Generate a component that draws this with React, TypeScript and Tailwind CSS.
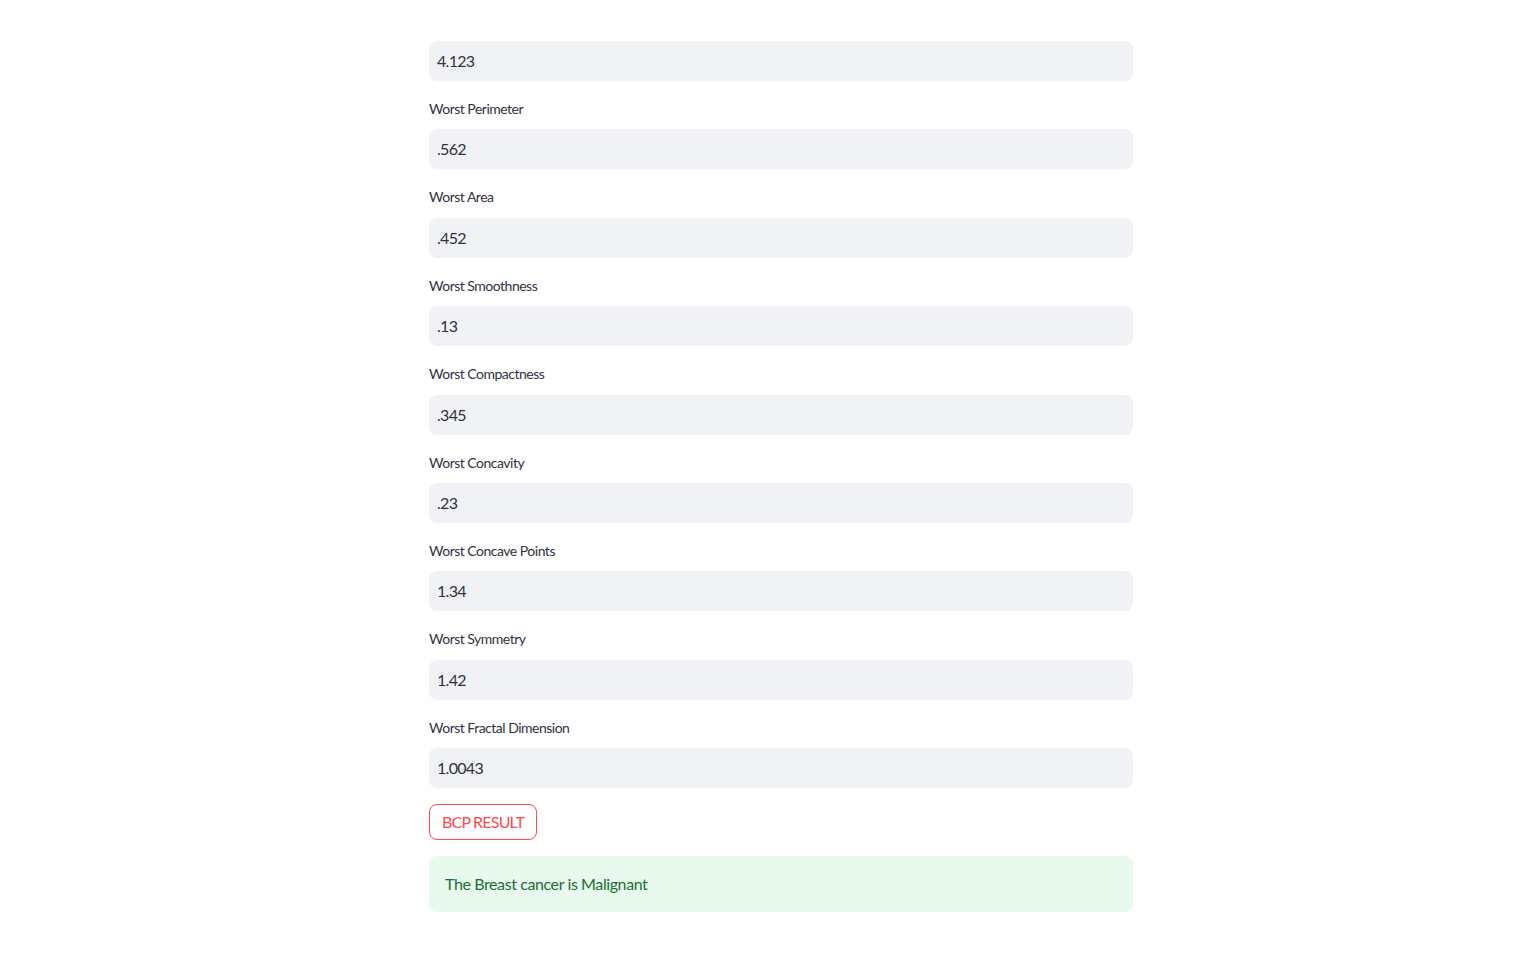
const fields = [
  { label: "Worst Perimeter", value: ".562" },
  { label: "Worst Area", value: ".452" },
  { label: "Worst Smoothness", value: ".13" },
  { label: "Worst Compactness", value: ".345" },
  { label: "Worst Concavity", value: ".23" },
  { label: "Worst Concave Points", value: "1.34" },
  { label: "Worst Symmetry", value: "1.42" },
  { label: "Worst Fractal Dimension", value: "1.0043" },
]

function NumberBox({ value }: { value: string }) {
  return (
    <div className="h-10 w-full rounded-lg bg-[#f0f2f6] flex items-center px-2 text-base tracking-[-0.7px] text-[#31333f]">
      {value}
    </div>
  )
}

export default function App() {
  return (
    <div className="min-h-screen bg-white font-['Lato','Liberation_Sans',sans-serif]">
      <div className="w-[704px] ml-[429px] pt-[41px] flex flex-col">
        <NumberBox value="4.123" />
        {fields.map((f) => (
          <div key={f.label} className="flex flex-col">
            <div className="mt-4 h-6 mb-[8.375px] flex items-center text-sm tracking-[-0.5px] text-[#31333f]">
              {f.label}
            </div>
            <NumberBox value={f.value} />
          </div>
        ))}
        <div className="mt-4">
          <button className="h-9 px-3 rounded-lg border border-[#ff4b4b] text-[#ff4b4b] text-base tracking-[-0.8px] bg-white">
            BCP RESULT
          </button>
        </div>
        <div className="mt-4 h-14 rounded-lg bg-[#e8f9ee] flex items-center px-4 text-base tracking-[-0.4px] text-[#177233]">
          The Breast cancer is Malignant
        </div>
      </div>
    </div>
  )
}
